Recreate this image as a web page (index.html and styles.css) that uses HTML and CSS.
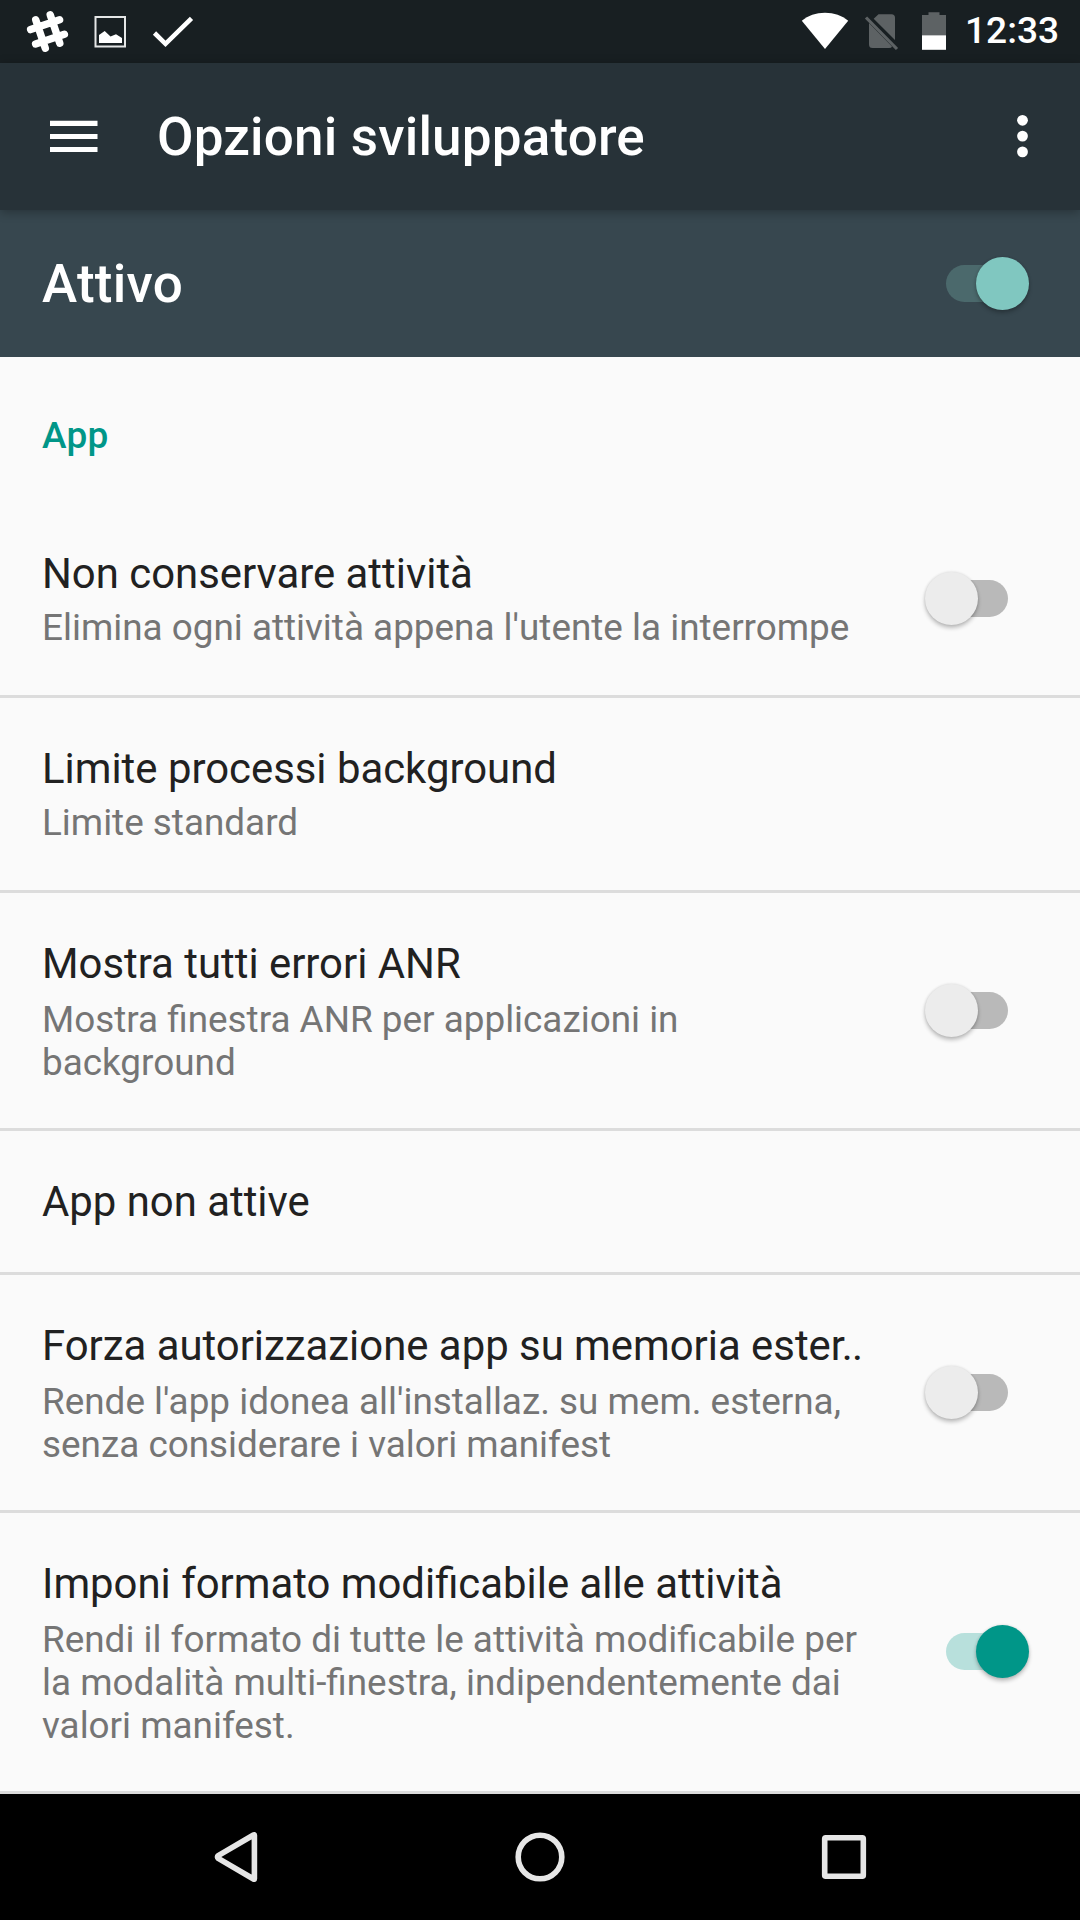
FILE: index.html
```html
<!DOCTYPE html>
<html lang="it">
<head>
<meta charset="utf-8">
<title>Opzioni sviluppatore</title>
<link rel="stylesheet" href="styles.css">
</head>
<body>
<div class="screen">
  <div class="status-bar">
    <svg class="status-left" width="200" height="63" viewBox="0 0 200 63">
      <path class="slack" d="M35.7 19.7L45.3 48.3M50.2 14.7L59.8 43.3M30.6 29.6L59.6 19.8M35.6 44L64.4 34.2"/>
      <rect class="photo-frame" x="95.5" y="17" width="29.5" height="29.5"/>
      <path class="solid" d="M99 43V35L104.7 31L110.5 36.5L116 34.3L122 38V43Z"/>
      <path class="check" d="M154.5 33L165.5 43.8L191.5 18.3"/>
    </svg>
    <div class="status-right">
      <svg width="150" height="63" viewBox="800 0 150 63">
        <path class="solid" d="M825 49L801.8 20.8C808 15.5 816 12.8 825 12.8S842 15.5 848.2 20.8Z"/>
        <path class="dim" d="M878.5 14.3H891.5Q895 14.3 895 17.8V40L873.7 18.7ZM869 23L892 46.5Q891.5 48 889 48H872.5Q869 48 869 44.5Z"/>
        <path class="slash" d="M866 17.5L897 49"/>
        <path class="dim" d="M928.5 12.2H939.5V15H946V35.5H922V15H928.5Z"/>
        <rect class="solid" x="922" y="35.3" width="24" height="14.5"/>
      </svg>
      <span class="clock">12:33</span>
    </div>
  </div>

  <header class="app-bar">
    <svg width="48" height="32" viewBox="0 0 48 32"><path class="solid" d="M0 .7H47.5V5.9H0ZM0 13.9H47.5V19H0ZM0 27H47.5V32H0Z"/></svg>
    <h1 class="app-title">Opzioni sviluppatore</h1>
    <svg width="12" height="44" viewBox="0 0 12 44"><g class="solid"><circle cx="5.5" cy="6.3" r="5.4"/><circle cx="5.5" cy="22.1" r="5.4"/><circle cx="5.5" cy="37.9" r="5.4"/></g></svg>
  </header>

  <div class="master">
    <span class="master-label">Attivo</span>
    <div class="switch on light"><div class="thumb"></div></div>
  </div>

  <main class="list">
    <h2 class="category">App</h2>
    <div class="item">
      <div class="text">
        <div class="title">Non conservare attività</div>
        <div class="summary">Elimina ogni attività appena l'utente la interrompe</div>
      </div>
      <div class="switch"><div class="thumb"></div></div>
    </div>
    <div class="item">
      <div class="text">
        <div class="title">Limite processi background</div>
        <div class="summary">Limite standard</div>
      </div>
    </div>
    <div class="item">
      <div class="text">
        <div class="title">Mostra tutti errori ANR</div>
        <div class="summary multi">Mostra finestra ANR per applicazioni in<br>background</div>
      </div>
      <div class="switch"><div class="thumb"></div></div>
    </div>
    <div class="item">
      <div class="text">
        <div class="title">App non attive</div>
      </div>
    </div>
    <div class="item">
      <div class="text">
        <div class="title">Forza autorizzazione app su memoria este<span class="tight">r.</span>.</div>
        <div class="summary multi">Rende l'app idonea all'installaz. su mem. esterna,<br>senza considerare i valori manifest</div>
      </div>
      <div class="switch"><div class="thumb"></div></div>
    </div>
    <div class="item">
      <div class="text">
        <div class="title">Imponi formato modificabile alle attività</div>
        <div class="summary multi">Rendi il formato di tutte le attività modificabile per<br>la modalità multi-finestra, indipendentemente dai<br>valori manifest.</div>
      </div>
      <div class="switch on"><div class="thumb"></div></div>
    </div>
  </main>

  <nav class="nav-bar">
    <svg class="nav-icon" width="56" height="56" viewBox="0 0 56 56"><path d="M46.4 6.3V49.7Q46.4 50.7 45.5 50L10.2 29.3Q8.7 28 10.2 26.7L45.5 6Q46.4 5.3 46.4 6.3Z"/></svg>
    <svg class="nav-icon" width="56" height="56" viewBox="0 0 56 56"><circle cx="28" cy="28" r="21.8"/></svg>
    <svg class="nav-icon" width="56" height="56" viewBox="0 0 56 56"><rect x="8.7" y="8.7" width="38.6" height="38.6" rx="1"/></svg>
  </nav>
</div>
</body>
</html>
```
FILE: styles.css
```css
* { box-sizing: border-box; }

body {
  margin: 0;
  font-family: Roboto, "Noto Sans", sans-serif;
  background: #000;
}

h1, h2 { margin: 0; font-weight: 500; }
svg { display: block; flex: none; }

.screen {
  width: 1080px;
  height: 1920px;
  display: flex;
  flex-direction: column;
  overflow: hidden;
}

.solid { fill: #fff; }
.dim { fill: #5d6264; }
.slash { fill: none; stroke: #5d6264; stroke-width: 3.2; }

/* Status bar */
.status-bar {
  height: 63px;
  flex: none;
  display: flex;
  justify-content: space-between;
  background: #181f22;
}
.slack { fill: none; stroke: #fff; stroke-width: 7.4; stroke-linecap: round; }
.photo-frame { fill: none; stroke: #e4e6e6; stroke-width: 2; }
.check { fill: none; stroke: #fff; stroke-width: 4.6; }
.status-right { display: flex; padding-right: 21px; }
.clock {
  width: 94px;
  margin-left: 15px;
  color: #fff;
  font-size: 37.1px;
  font-weight: 500;
  line-height: 62px;
  white-space: nowrap;
}

/* App bar */
.app-bar {
  height: 147px;
  flex: none;
  display: flex;
  align-items: center;
  padding: 0 51px 2px 50px;
  background: #273238;
  box-shadow: 0 2px 10px rgba(0, 0, 0, .3);
  z-index: 1;
}
.app-title {
  flex: 1;
  margin-left: 59px;
  padding-top: 2px;
  color: #fff;
  font-size: 53px;
  letter-spacing: .18px;
  line-height: 62px;
}

/* Master switch */
.master {
  height: 147px;
  flex: none;
  display: flex;
  align-items: center;
  justify-content: space-between;
  padding: 0 51px 0 42px;
  background: #37474f;
}
.master-label {
  color: #fff;
  font-size: 53px;
  font-weight: 500;
  letter-spacing: .25px;
  line-height: 62px;
}

/* Preference list */
.list { flex: 1; background: #fafafa; }
.category {
  height: 146px;
  padding: 57px 42px 0;
  color: #009688;
  font-size: 37px;
  letter-spacing: .25px;
  line-height: 43px;
}
.item {
  display: flex;
  align-items: center;
  justify-content: space-between;
  padding: 0 72px 0 42px;
  border-bottom: 3px solid #dcdcdc;
}
.item:has(.on) { padding-right: 51px; }
.text { padding: 46px 0 45px; white-space: nowrap; }
.title { color: #212121; font-size: 41.87px; line-height: 50px; }
.tight { letter-spacing: -.8px; }
.summary {
  margin: 7px 0 1px;
  color: #757575;
  font-size: 36.87px;
  line-height: 43px;
}
.summary.multi { margin: 9px 0 -1px; }

/* Switches */
.switch {
  position: relative;
  width: 83px;
  height: 37px;
  flex: none;
  margin-bottom: 1px;
  border-radius: 19px;
  background: linear-gradient(90deg, transparent 26px, #b9b9b9 26px);
}
.switch.on { background: linear-gradient(90deg, #b8e0dc 56px, transparent 56px); }
.switch.on.light { background: linear-gradient(90deg, #4b696c 56px, transparent 56px); }
.thumb {
  position: absolute;
  top: -8px;
  left: 0;
  width: 53px;
  height: 53px;
  border-radius: 50%;
  background: #ececec;
  box-shadow: 0 3px 4px rgba(0, 0, 0, .24), 0 0 3px rgba(0, 0, 0, .12);
}
.on .thumb { left: auto; right: 0; background: #009688; }
.on.light .thumb { background: #80c7c0; }

/* Navigation bar */
.nav-bar {
  height: 126px;
  flex: none;
  display: flex;
  align-items: center;
  justify-content: space-between;
  padding: 0 208px;
  background: #000;
}
.nav-icon { fill: none; stroke: #e6e6e6; stroke-width: 5.6; stroke-linejoin: round; }
```
